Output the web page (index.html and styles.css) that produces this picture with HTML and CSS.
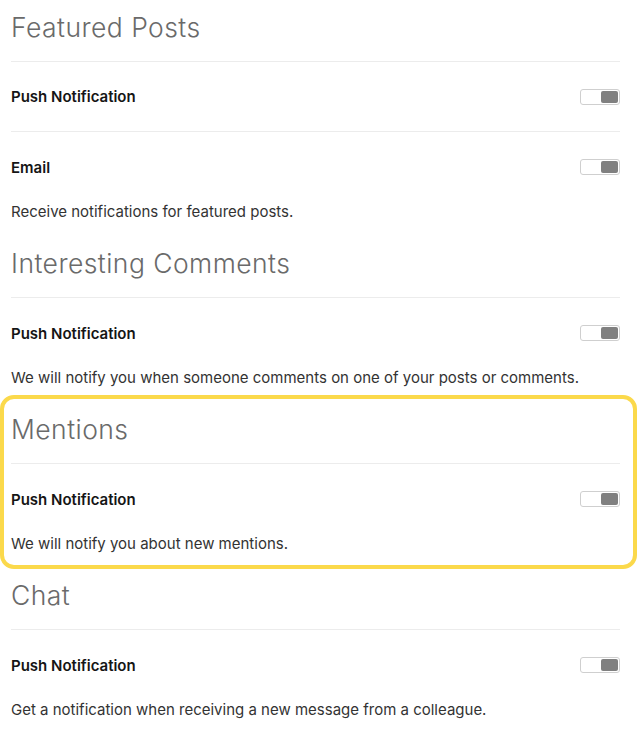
FILE: index.html
```html
<!DOCTYPE html>
<html lang="en">
<head>
<meta charset="utf-8">
<title>Notification settings</title>
<link rel="stylesheet" href="styles.css">
</head>
<body>
<main class="page">
  <section class="group">
    <h2 class="group-title">Featured Posts</h2>
    <div class="row">
      <span class="row-label">Push Notification</span>
      <span class="toggle"><span class="knob"></span></span>
    </div>
    <div class="row">
      <span class="row-label">Email</span>
      <span class="toggle"><span class="knob"></span></span>
    </div>
    <p class="group-desc">Receive notifications for featured posts.</p>
  </section>

  <section class="group">
    <h2 class="group-title">Interesting Comments</h2>
    <div class="row">
      <span class="row-label">Push Notification</span>
      <span class="toggle"><span class="knob"></span></span>
    </div>
    <p class="group-desc">We will notify you when someone comments on one of your posts or comments.</p>
  </section>

  <section class="group group-highlight">
    <h2 class="group-title">Mentions</h2>
    <div class="row">
      <span class="row-label">Push Notification</span>
      <span class="toggle"><span class="knob"></span></span>
    </div>
    <p class="group-desc">We will notify you about new mentions.</p>
  </section>

  <section class="group">
    <h2 class="group-title">Chat</h2>
    <div class="row">
      <span class="row-label">Push Notification</span>
      <span class="toggle"><span class="knob"></span></span>
    </div>
    <p class="group-desc">Get a notification when receiving a new message from a colleague.</p>
  </section>
</main>
</body>
</html>
```

FILE: styles.css
```css
* {
  box-sizing: border-box;
}

html, body {
  margin: 0;
  padding: 0;
  background: #ffffff;
}

body {
  font-family: Inter, "Liberation Sans", sans-serif;
  color: #1a1a1a;
}

.page {
  width: 609px;
  margin-left: 11px;
  padding-top: 7px;
  display: flex;
  flex-direction: column;
  gap: 21px;
}

.group {
  position: relative;
  display: flex;
  flex-direction: column;
}

.group-title {
  margin: 0;
  font-size: 26.5px;
  font-weight: 300;
  letter-spacing: 0.45px;
  line-height: 40px;
  color: #6a6a6a;
  padding-bottom: 14px;
  border-bottom: 1px solid #ececec;
}

.row {
  height: 70px;
  display: flex;
  align-items: center;
  justify-content: space-between;
  border-bottom: 1px solid #ececec;
}

.row:last-of-type {
  border-bottom: none;
}

.row-label {
  font-size: 15px;
  font-weight: 600;
  color: #151515;
}

.toggle {
  width: 40px;
  height: 16px;
  border: 1px solid #cfcfcf;
  border-radius: 3px;
  padding: 1px;
  display: flex;
  justify-content: flex-end;
  background: #ffffff;
}

.knob {
  width: 17px;
  height: 12px;
  border-radius: 2px;
  background: #808080;
}

.group-desc {
  margin: 0;
  font-size: 15px;
  line-height: 20px;
  color: #333333;
}

.group-highlight::before {
  content: "";
  position: absolute;
  top: -14px;
  bottom: -15px;
  left: -11px;
  right: -17px;
  border: 4px solid #fbd94b;
  border-radius: 14px;
  pointer-events: none;
}
```
